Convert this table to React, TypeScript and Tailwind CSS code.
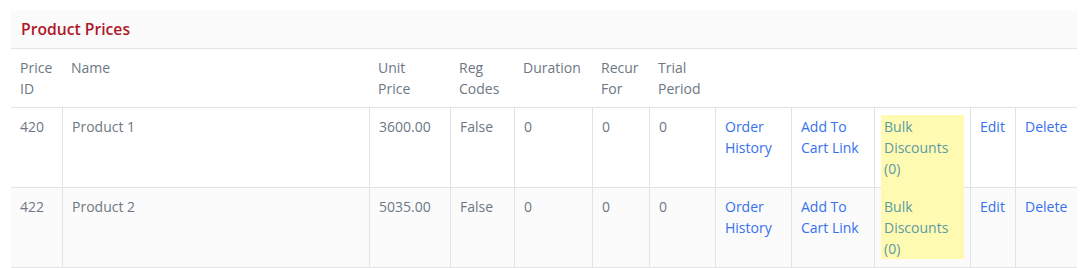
import type { ReactNode } from 'react';

interface PriceRow {
  id: number;
  name: string;
  unitPrice: string;
  regCodes: string;
  duration: number;
  recurFor: number;
  trialPeriod: number;
  discounts: number;
}

const rows: PriceRow[] = [
  { id: 420, name: 'Product 1', unitPrice: '3600.00', regCodes: 'False', duration: 0, recurFor: 0, trialPeriod: 0, discounts: 0 },
  { id: 422, name: 'Product 2', unitPrice: '5035.00', regCodes: 'False', duration: 0, recurFor: 0, trialPeriod: 0, discounts: 0 },
];

const colWidths = ['w-[51px]', 'w-[307px]', 'w-[81px]', 'w-[64px]', 'w-[78px]', 'w-[57px]', 'w-[66px]', 'w-[76px]', 'w-[83px]', 'w-[96px]', 'w-[45px]', 'w-[62px]'];

const headers: ReactNode[] = [
  <>Price<br />ID</>,
  'Name',
  <>Unit<br />Price</>,
  <>Reg<br />Codes</>,
  'Duration',
  <>Recur<br />For</>,
  <>Trial<br />Period</>,
  '',
  '',
  '',
  '',
  '',
];

function Cell({ first, children }: { first?: boolean; children?: ReactNode }) {
  return (
    <td
      className={`border-b border-[#e2e3e8] pl-[9px] pr-[7px] py-2 align-top ${first ? '' : 'border-l'}`}
    >
      {children}
    </td>
  );
}

function Link({ children }: { children: ReactNode }) {
  return <a className="text-[#3571f0] cursor-pointer">{children}</a>;
}

export default function App() {
  return (
    <div className="bg-white p-[10px] pl-[11px] pr-[9px] font-['Open_Sans',sans-serif] text-[14px] leading-[21px] text-[#6d7884]">
      <div className="w-[1066px]">
        <div className="border-b border-[#e2e3e8] bg-[#fbfbfb] px-[10px] h-[39px] flex items-center">
          <h2 className="text-[15.7px] font-semibold text-[#b0182a]">Product Prices</h2>
        </div>
        <table className="table-fixed border-separate border-spacing-0 w-[1066px]">
          <colgroup>
            {colWidths.map((w, i) => (
              <col key={i} className={w} />
            ))}
          </colgroup>
          <thead>
            <tr>
              {headers.map((h, i) => (
                <th
                  key={i}
                  className="border-b border-[#e2e3e8] pl-[9px] pr-[7px] py-2 text-left align-top font-normal"
                >
                  {h}
                </th>
              ))}
            </tr>
          </thead>
          <tbody>
            {rows.map((r, idx) => (
              <tr key={r.id} className={idx % 2 === 1 ? 'bg-[#fbfbfb]' : 'bg-white'}>
                <Cell first>{r.id}</Cell>
                <Cell>{r.name}</Cell>
                <Cell>{r.unitPrice}</Cell>
                <Cell>{r.regCodes}</Cell>
                <Cell>{r.duration}</Cell>
                <Cell>{r.recurFor}</Cell>
                <Cell>{r.trialPeriod}</Cell>
                <Cell>
                  <Link>Order History</Link>
                </Cell>
                <Cell>
                  <Link>Add To Cart Link</Link>
                </Cell>
                <td
                  className={`border-b border-l border-[#e2e3e8] px-[6px] align-top ${
                    idx === 0 ? 'pt-[7px] pb-0' : 'pt-0 pb-2'
                  }`}
                >
                  <div
                    className={`relative z-10 bg-[#fffab2] px-[3px] text-[#5b9aa6] ${
                      idx === 0 ? 'pt-px pb-[9px] -mb-px' : 'pt-2 pb-0'
                    }`}
                  >
                    Bulk
                    <br />
                    Discounts
                    <br />({r.discounts})
                  </div>
                </td>
                <Cell>
                  <Link>Edit</Link>
                </Cell>
                <Cell>
                  <Link>Delete</Link>
                </Cell>
              </tr>
            ))}
          </tbody>
        </table>
      </div>
    </div>
  );
}
